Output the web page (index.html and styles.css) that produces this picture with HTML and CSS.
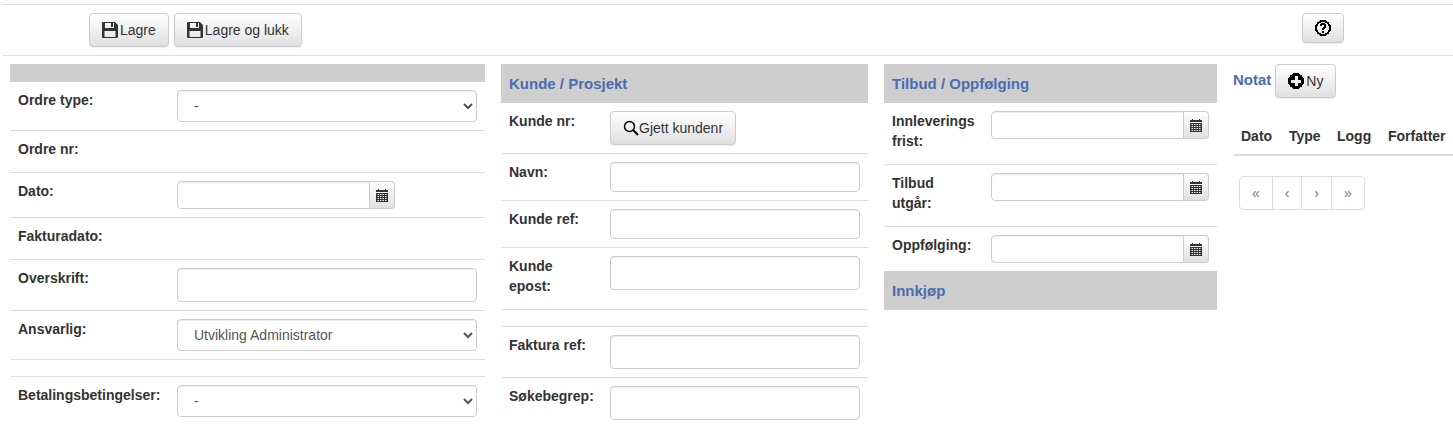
FILE: index.html
```html
<!DOCTYPE html>
<html lang="no">
<head>
  <meta charset="UTF-8" />
  <title>Ordre</title>
  <link rel="stylesheet" href="styles.css">
</head>
<body>
<svg class="sprites" width="0" height="0">
  <symbol id="i-save" viewBox="0 0 16 16">
    <path fill-rule="evenodd" d="M1 0H13L16 3V15a1 1 0 0 1-1 1H1a1 1 0 0 1-1-1V1a1 1 0 0 1 1-1ZM3 1V6H12V1H11V5H9V1ZM2.5 9V15H13.500V9Z"/>
  </symbol>
  <symbol id="i-cal" viewBox="0 0 12 13">
    <path fill-rule="evenodd" d="M2 0H3V1H9V0H10V1H12V3H0V1H2ZM0 4H12V13H0ZM1.500 5V6H3V5ZM4 5V6H5.500V5ZM6.500 5V6H8V5ZM9 5V6H10.500V5ZM1.500 7V8H3V7ZM4 7V8H5.500V7ZM6.500 7V8H8V7ZM9 7V8H10.500V7ZM1.500 9V10H3V9ZM4 9V10H5.500V9ZM6.500 9V10H8V9ZM9 9V10H10.500V9ZM1.500 11V12H3V11ZM4 11V12H5.500V11ZM6.500 11V12H8V11ZM9 11V12H10.500V11Z"/>
  </symbol>
</svg>

<div class="toolbar">
  <div class="toolbar-left">
    <button class="btn"><svg class="icon icon-soft"><use href="#i-save"/></svg>Lagre</button>
    <button class="btn"><svg class="icon icon-soft"><use href="#i-save"/></svg>Lagre og lukk</button>
  </div>
  <button class="btn btn-help">
    <svg class="icon icon-crisp" viewBox="0 0 16 16">
      <circle cx="8" cy="8" r="7" fill="none" stroke="#000" stroke-width="2"/>
      <path d="M4.500 6.200C4.500 4.100 6.100 2.800 8.100 2.800s3.500 1.200 3.500 3c0 1.400-.8 2.100-1.700 2.700-.6.400-.7.700-.7 1.400H6.800c0-1.400.3-2.100 1.200-2.700.6-.4 1-.7 1-1.200s-.4-.8-.9-.8-1 .4-1 1ZM6.800 10.700H9.200V13.200H6.800Z"/>
    </svg>
  </button>
</div>

<div class="main">
  <section class="col col-order">
    <h3 class="col-title col-title-empty"></h3>
    <div class="row"><label>Ordre type:</label><select class="ctl ctl-select"><option>-</option></select></div>
    <div class="row"><label>Ordre nr:</label></div>
    <div class="row">
      <label>Dato:</label>
      <div class="date-group"><input class="ctl ctl-date" type="text"><span class="addon"><svg class="cal"><use href="#i-cal"/></svg></span></div>
    </div>
    <div class="row"><label>Fakturadato:</label></div>
    <div class="row"><label>Overskrift:</label><input class="ctl" type="text"></div>
    <div class="row"><label>Ansvarlig:</label><select class="ctl ctl-select"><option>Utvikling Administrator</option></select></div>
    <div class="row row-blank"></div>
    <div class="row row-last"><label>Betalingsbetingelser:</label><select class="ctl ctl-select"><option>-</option></select></div>
  </section>

  <section class="col col-customer">
    <h3 class="col-title">Kunde / Prosjekt</h3>
    <div class="row">
      <label>Kunde nr:</label>
      <div><button class="btn">
        <svg class="icon icon-tight" viewBox="0 0 16 16"><circle cx="6.500" cy="6.500" r="5" fill="none" stroke="#000" stroke-width="1.500"/><path d="M10 10L15 15" stroke="#000" stroke-width="2"/></svg>Gjett kundenr</button></div>
    </div>
    <div class="row"><label>Navn:</label><input class="ctl ctl-short" type="text"></div>
    <div class="row"><label>Kunde ref:</label><input class="ctl ctl-short" type="text"></div>
    <div class="row"><label>Kunde<br>epost:</label><input class="ctl" type="text"></div>
    <div class="row row-blank"></div>
    <div class="row"><label>Faktura ref:</label><input class="ctl" type="text"></div>
    <div class="row row-last"><label>Søkebegrep:</label><input class="ctl" type="text"></div>
  </section>

  <section class="col col-offer">
    <h3 class="col-title">Tilbud / Oppfølging</h3>
    <div class="row">
      <label>Innleverings<br>frist:</label>
      <div class="date-group"><input class="ctl ctl-date" type="text"><span class="addon"><svg class="cal"><use href="#i-cal"/></svg></span></div>
    </div>
    <div class="row">
      <label>Tilbud<br>utgår:</label>
      <div class="date-group"><input class="ctl ctl-date" type="text"><span class="addon"><svg class="cal"><use href="#i-cal"/></svg></span></div>
    </div>
    <div class="row row-last">
      <label>Oppfølging:</label>
      <div class="date-group"><input class="ctl ctl-date" type="text"><span class="addon"><svg class="cal"><use href="#i-cal"/></svg></span></div>
    </div>
    <h3 class="col-title">Innkjøp</h3>
  </section>

  <section class="col col-notes">
    <div class="notes-head">
      <span class="notes-title">Notat</span>
      <button class="btn">
        <svg class="icon icon-crisp" viewBox="0 0 16 16"><path fill-rule="evenodd" d="M8 0a8 8 0 1 1 0 16A8 8 0 0 1 8 0ZM6.500 3V6.500H3V9.500H6.500V13H9.500V9.500H13V6.500H9.500V3Z"/></svg>Ny</button>
    </div>
    <table class="notes-table">
      <thead><tr><th class="th-dato">Dato</th><th class="th-type">Type</th><th class="th-logg">Logg</th><th>Forfatter</th></tr></thead>
    </table>
    <ul class="pager">
      <li class="p-first">«</li>
      <li class="p-prev">‹</li>
      <li class="p-next">›</li>
      <li class="p-last">»</li>
    </ul>
  </section>
</div>
</body>
</html>
```
FILE: styles.css
```css
* {
  box-sizing: border-box;
}
body {
  margin: 0;
  background: #fff;
  color: #333;
  font-family: "Liberation Sans", Arial, sans-serif;
  font-size: 14px;
  line-height: 20px;
}
.sprites {
  position: absolute;
}
.toolbar {
  display: flex;
  justify-content: space-between;
  margin: 4px 0 0 2px;
  padding: 8px 109px 8px 87px;
  border-top: 1px solid #ddd;
  border-bottom: 1px solid #ddd;
  height: 52px;
}
.toolbar-left {
  display: flex;
  gap: 5px;
}
.btn {
  display: inline-flex;
  align-items: center;
  height: 34px;
  padding: 6px 12px;
  border: 1px solid #ccc;
  border-radius: 4px;
  background: linear-gradient(to bottom, #fff, #e0e0e0);
  box-shadow: inset 0 1px 0 rgba(255,255,255,.15), 0 1px 1px rgba(0,0,0,.075);
  color: #333;
  font: inherit;
}
.icon {
  width: 16px;
  height: 16px;
  margin-right: 2px;
  flex: none;
}
.icon-soft {
  fill: #333;
}
.icon-crisp {
  shape-rendering: crispEdges;
}
.icon-tight {
  margin-right: 0;
}
.btn-help {
  width: 42px;
  height: 30px;
  padding: 0 12px;
}
.btn-help .icon {
  margin: 0;
}
.main {
  display: flex;
  gap: 16px;
  padding: 8px 0 0 10px;
}
.col-order {
  width: 475px;
}
.col-customer {
  width: 367px;
}
.col-offer {
  width: 333px;
}
.col-notes {
  width: 220px;
}
.col-title {
  margin: 0;
  height: 39px;
  padding: 10px 8px 9px;
  background: #cecece;
  color: #4c6cb0;
  font-size: 15px;
  font-weight: bold;
  line-height: 20px;
}
.col-title-empty {
  height: 18px;
  padding: 0;
}
.row {
  display: grid;
  padding: 8px;
  border-bottom: 1px solid #ddd;
}
.row-last {
  border-bottom: 0;
}
.row-blank {
  height: 17px;
  padding: 0;
}
.col-order .row {
  grid-template-columns: 159px 300px;
}
.col-customer .row {
  grid-template-columns: 101px 250px;
}
.col-offer .row {
  grid-template-columns: 99px 218px;
}
label {
  display: block;
  margin-bottom: 5px;
  font-weight: bold;
}
.ctl {
  display: block;
  width: 100%;
  height: 34px;
  padding: 6px 12px;
  border: 1px solid #ccc;
  border-radius: 4px;
  background: #fff;
  box-shadow: inset 0 1px 1px rgba(0,0,0,.075);
  color: #555;
  font: inherit;
}
.ctl-select {
  height: 32px;
}
.ctl-short {
  height: 30px;
}
.date-group {
  display: flex;
  width: 218px;
  height: 28px;
}
.ctl-date {
  width: 193px;
  height: 28px;
  border-radius: 4px 0 0 4px;
}
.addon {
  display: flex;
  align-items: center;
  justify-content: center;
  width: 25px;
  border: 1px solid #ccc;
  border-left: 0;
  border-radius: 0 4px 4px 0;
  background: linear-gradient(to bottom, #fff, #e0e0e0);
}
.cal {
  width: 12px;
  height: 13px;
  fill: #333;
}
.notes-head {
  display: flex;
  align-items: flex-start;
  gap: 4px;
}
.notes-title {
  margin-top: 6px;
  color: #4c6cb0;
  font-size: 15px;
  font-weight: bold;
}
.notes-table {
  width: 220px;
  margin-top: 20px;
  border-collapse: collapse;
  table-layout: fixed;
}
.notes-table th {
  padding: 8px;
  border-bottom: 2px solid #ddd;
  font-weight: bold;
  text-align: left;
  white-space: nowrap;
}
.th-dato,
.th-type {
  width: 48px;
}
.th-logg {
  width: 51px;
}
.pager {
  display: flex;
  width: 126px;
  height: 34px;
  margin: 20px 0 0 6px;
  padding: 0;
  border: 1px solid #ddd;
  border-radius: 4px;
  list-style: none;
  color: #777;
}
.pager li {
  display: flex;
  align-items: center;
  justify-content: center;
  border-right: 1px solid #ddd;
}
.pager li:last-child {
  border-right: 0;
}
.p-first {
  width: 33px;
}
.p-prev {
  width: 29px;
}
.p-next {
  width: 30px;
}
.p-last {
  width: 32px;
}
```
